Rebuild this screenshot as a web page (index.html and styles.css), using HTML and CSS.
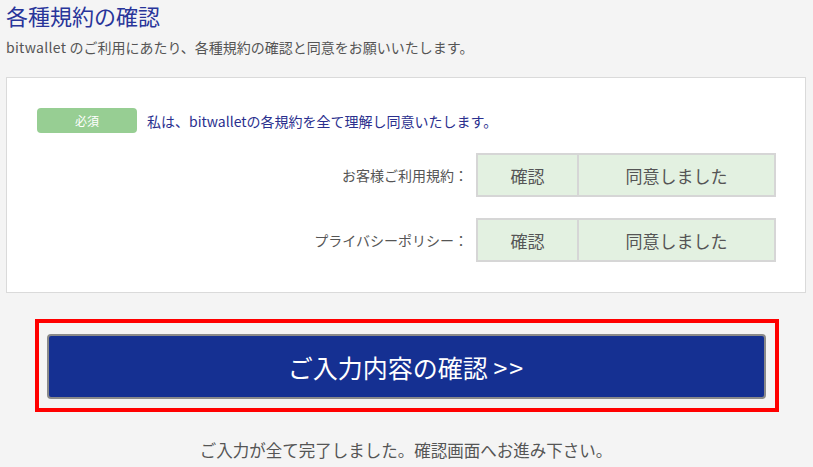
FILE: index.html
```html
<!DOCTYPE html>
<html lang="ja">
<head>
<meta charset="utf-8">
<title>各種規約の確認</title>
<link rel="stylesheet" href="styles.css">
</head>
<body>
<div class="page">
  <h1 class="title">各種規約の確認</h1>
  <p class="lead"><span class="latin">bitwallet</span> のご利用にあたり、各種規約の確認と同意をお願いいたします。</p>
  <div class="panel">
    <div class="agree">
      <span class="badge">必須</span>
      <span class="agree-text">私は、bitwalletの各規約を全て理解し同意いたします。</span>
    </div>
    <div class="row">
      <span class="label">お客様ご利用規約：</span>
      <div class="box">
        <span class="cell cell-check">確認</span>
        <span class="cell cell-done">同意しました</span>
      </div>
    </div>
    <div class="row row-second">
      <span class="label">プライバシーポリシー：</span>
      <div class="box">
        <span class="cell cell-check">確認</span>
        <span class="cell cell-done">同意しました</span>
      </div>
    </div>
  </div>
  <div class="highlight">
    <button class="submit" type="button">ご入力内容の確認 <span class="arrows">&gt;&gt;</span></button>
  </div>
  <p class="note">ご入力が全て完了しました。確認画面へお進み下さい。</p>
</div>
</body>
</html>
```
FILE: styles.css
```css
html, body {
  margin: 0;
  padding: 0;
  background: #f4f4f4;
}
body {
  font-family: "Noto Sans CJK JP", "Noto Sans", sans-serif;
  color: #555;
}
.page {
  width: 800px;
  margin-left: 6px;
}
.title {
  margin: 0;
  font-size: 22px;
  line-height: 30px;
  font-weight: normal;
  color: #28359a;
}
.lead {
  margin: 7px 0 0 0;
  font-size: 14px;
  line-height: 20px;
  color: #555;
}
.latin {
  letter-spacing: 0.3px;
}
.panel {
  margin-top: 20px;
  background: #fff;
  border: 1px solid #dadada;
  padding: 30px 29px 30px 30px;
}
.agree {
  display: flex;
  align-items: center;
  height: 25px;
}
.badge {
  width: 100px;
  height: 25px;
  border-radius: 4px;
  background: #97ce93;
  color: #fff;
  font-size: 12px;
  line-height: 25px;
  text-align: center;
}
.agree-text {
  margin-left: 10px;
  font-size: 14px;
  color: #2a2f8e;
}
.row {
  display: flex;
  justify-content: flex-end;
  align-items: center;
  gap: 8px;
  margin-top: 20px;
}
.row-second {
  margin-top: 21px;
}
.label {
  font-size: 14px;
  color: #555;
}
.box {
  display: flex;
  width: 300px;
  height: 44px;
  box-sizing: border-box;
  border: 2px solid #d6d6d6;
  background: #e3f1e1;
}
.cell {
  display: flex;
  align-items: center;
  justify-content: center;
  font-size: 17px;
  color: #555;
}
.cell-check {
  width: 99px;
  border-right: 2px solid #d6d6d6;
}
.cell-done {
  flex: 1;
}
.highlight {
  margin: 26px 0 0 29px;
  width: 744px;
  box-sizing: border-box;
  border: 4px solid #ff0000;
  padding: 11px 9px 9px 8px;
}
.submit {
  display: block;
  width: 100%;
  height: 65px;
  box-sizing: border-box;
  border: 2px solid #8a8a8a;
  border-radius: 4px;
  background: #153092;
  color: #fff;
  font-family: "Noto Sans CJK JP", "Noto Sans", sans-serif;
  font-size: 25px;
  padding: 0;
}
.arrows {
  letter-spacing: 2px;
}
.note {
  margin: 26px 0 0 0;
  text-align: center;
  font-size: 16.5px;
  line-height: 24px;
  color: #555;
}
```
